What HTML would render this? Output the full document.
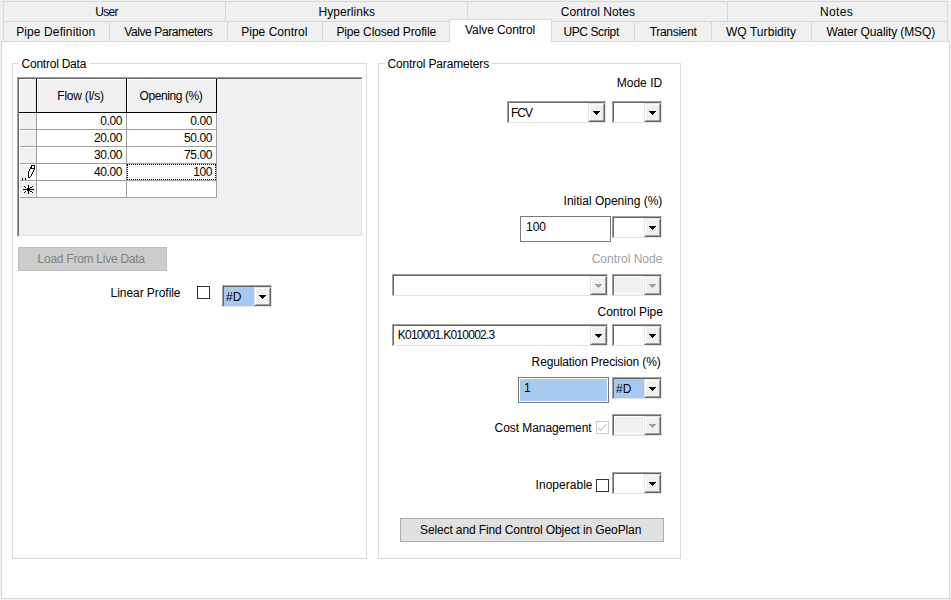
<!DOCTYPE html>
<html><head><meta charset="utf-8">
<style>
*{box-sizing:border-box;margin:0;padding:0}
html,body{width:951px;height:600px;overflow:hidden;background:#f0f0f0;position:relative;font-family:"Liberation Sans",sans-serif;font-size:12px;color:#000}
.a{position:absolute}
.t{position:absolute;font-size:12px;line-height:14px;white-space:nowrap}
.hl{position:absolute;height:1px;background:#d9d9d9}
.vl{position:absolute;width:1px;background:#d9d9d9}
.gb{position:absolute;border:1px solid #dcdcdc}
/* classic combo */
.cb{position:absolute;height:22px;border-top:1px solid #a0a0a0;border-left:1px solid #a0a0a0;border-right:1px solid #e3e3e3;border-bottom:1px solid #e3e3e3}
.cb>.in{position:absolute;left:0;top:0;right:0;bottom:0;border-top:1px solid #696969;border-left:1px solid #696969;background:#fff}
.cb .btn{position:absolute;right:0;top:0;bottom:0;width:17px;background:#f0f0f0;border-top:1px solid #e3e3e3;border-left:1px solid #e3e3e3;border-right:1px solid #696969;border-bottom:1px solid #696969}
.cb .btn>i{position:absolute;left:0;top:0;right:0;bottom:0;border-top:1px solid #fff;border-left:1px solid #fff;border-right:1px solid #a0a0a0;border-bottom:1px solid #a0a0a0}
.cb .arr{position:absolute;left:4px;top:7px}

.tb{position:absolute;border:1px solid #7a7a7a;background:#fff;height:26px}
.chk{position:absolute;width:13px;height:13px;border:1px solid #333;background:#fff}
</style></head>
<body>
<!-- tabs -->
<div class="hl" style="left:3px;top:1px;width:945px"></div>
<div class="vl" style="left:3px;top:1px;height:40px"></div>
<div class="vl" style="left:947px;top:1px;height:40px"></div>
<div class="hl" style="left:3px;top:21px;width:945px"></div>
<div class="vl" style="left:225px;top:1px;height:20px"></div>
<div class="vl" style="left:467px;top:1px;height:20px"></div>
<div class="vl" style="left:727px;top:1px;height:20px"></div>
<div class="vl" style="left:109px;top:21px;height:20px"></div>
<div class="vl" style="left:227px;top:21px;height:20px"></div>
<div class="vl" style="left:322px;top:21px;height:20px"></div>
<div class="vl" style="left:634px;top:21px;height:20px"></div>
<div class="vl" style="left:711px;top:21px;height:20px"></div>
<div class="vl" style="left:811px;top:21px;height:20px"></div>

<div class="t" style="left:95.3px;top:5px;letter-spacing:-0.73px">User</div>
<div class="t" style="left:318.5px;top:5px;letter-spacing:0.06px">Hyperlinks</div>
<div class="t" style="left:560.8px;top:5px;letter-spacing:0.06px">Control Notes</div>
<div class="t" style="left:820.0px;top:5px;letter-spacing:0.38px">Notes</div>

<div class="t" style="left:16.2px;top:25px;letter-spacing:0.11px">Pipe Definition</div>
<div class="t" style="left:124.2px;top:25px;letter-spacing:-0.39px">Valve Parameters</div>
<div class="t" style="left:241.2px;top:25px;letter-spacing:0.02px">Pipe Control</div>
<div class="t" style="left:336.4px;top:25px;letter-spacing:-0.13px">Pipe Closed Profile</div>
<div class="t" style="left:563.4px;top:25px;letter-spacing:-0.39px">UPC Script</div>
<div class="t" style="left:649.7px;top:25px;letter-spacing:-0.3px">Transient</div>
<div class="t" style="left:725.9px;top:25px;letter-spacing:0.07px">WQ Turbidity</div>
<div class="t" style="left:826.4px;top:25px;letter-spacing:-0.12px">Water Quality (MSQ)</div>

<!-- panel -->
<div class="a" style="left:1px;top:41px;width:949px;height:558px;background:#fff;border:1px solid #d9d9d9"></div>
<!-- selected tab -->
<div class="a" style="left:449px;top:19px;width:103px;height:23px;background:#fff;border:1px solid #d9d9d9;border-bottom:none"></div>
<div class="t" style="left:465.0px;top:23px;letter-spacing:-0.08px">Valve Control</div>

<!-- group 1 -->
<div class="gb" style="left:12px;top:63px;width:355px;height:496px"></div>
<div class="a" style="left:19px;top:58px;width:71px;height:10px;background:#fff"></div>
<div class="t" style="left:21.5px;top:57px;letter-spacing:-0.23px">Control Data</div>

<!-- grid -->
<div class="a" style="left:17px;top:77px;width:346px;height:160px;background:#f0f0f0;border-top:1px solid #a0a0a0;border-left:1px solid #a0a0a0;border-right:1px solid #fff;border-bottom:1px solid #fff"></div>
<div class="a" style="left:18px;top:78px;width:344px;height:158px;border-top:1px solid #696969;border-left:1px solid #696969;border-right:1px solid #e3e3e3;border-bottom:1px solid #e3e3e3"></div>
<!-- header cells -->
<div class="a" style="left:19px;top:79px;width:198px;height:34px;background:#f0f0f0"></div>
<div class="a" style="left:19px;top:79px;width:198px;height:1px;background:#fff"></div>
<div class="a" style="left:19px;top:79px;width:1px;height:33px;background:#fff"></div>
<div class="a" style="left:37px;top:79px;width:1px;height:33px;background:#fff"></div>
<div class="a" style="left:127px;top:79px;width:1px;height:33px;background:#fff"></div>
<div class="a" style="left:19px;top:112px;width:198px;height:1px;background:#000"></div>
<div class="a" style="left:36px;top:79px;width:1px;height:34px;background:#000"></div>
<div class="a" style="left:126px;top:79px;width:1px;height:34px;background:#000"></div>
<div class="a" style="left:216px;top:79px;width:1px;height:34px;background:#000"></div>
<!-- rows -->
<div class="a" style="left:19px;top:113px;width:17px;height:85px;background:#f0f0f0"></div>
<div class="a" style="left:37px;top:113px;width:179px;height:85px;background:#fff"></div>
<div class="a" style="left:19px;top:113px;width:1px;height:85px;background:#fff"></div>
<div class="a" style="left:20px;top:113px;width:16px;height:1px;background:#fff"></div>
<div class="a" style="left:20px;top:130px;width:16px;height:1px;background:#fff"></div>
<div class="a" style="left:20px;top:147px;width:16px;height:1px;background:#fff"></div>
<div class="a" style="left:20px;top:164px;width:16px;height:1px;background:#fff"></div>
<div class="a" style="left:20px;top:181px;width:16px;height:1px;background:#fff"></div>
<div class="a" style="left:20px;top:129px;width:197px;height:1px;background:#a0a0a0"></div>
<div class="a" style="left:20px;top:146px;width:197px;height:1px;background:#a0a0a0"></div>
<div class="a" style="left:20px;top:163px;width:197px;height:1px;background:#a0a0a0"></div>
<div class="a" style="left:20px;top:180px;width:197px;height:1px;background:#a0a0a0"></div>
<div class="a" style="left:20px;top:197px;width:197px;height:1px;background:#a0a0a0"></div>
<div class="a" style="left:36px;top:113px;width:1px;height:85px;background:#a0a0a0"></div>
<div class="a" style="left:126px;top:113px;width:1px;height:85px;background:#a0a0a0"></div>
<div class="a" style="left:216px;top:113px;width:1px;height:85px;background:#a0a0a0"></div>
<div class="t" style="left:57.3px;top:89px;letter-spacing:-0.22px">Flow (l/s)</div>
<div class="t" style="left:139.5px;top:89px;letter-spacing:-0.4px">Opening (%)</div>
<div class="t" style="left:37px;top:114px;width:85px;text-align:right;letter-spacing:-0.4px">0.00</div>
<div class="t" style="left:127px;top:114px;width:85px;text-align:right;letter-spacing:-0.4px">0.00</div>
<div class="t" style="left:37px;top:131px;width:85px;text-align:right;letter-spacing:-0.4px">20.00</div>
<div class="t" style="left:127px;top:131px;width:85px;text-align:right;letter-spacing:-0.4px">50.00</div>
<div class="t" style="left:37px;top:148px;width:85px;text-align:right;letter-spacing:-0.4px">30.00</div>
<div class="t" style="left:127px;top:148px;width:85px;text-align:right;letter-spacing:-0.4px">75.00</div>
<div class="t" style="left:37px;top:165px;width:85px;text-align:right;letter-spacing:-0.4px">40.00</div>
<div class="a" style="left:127px;top:164px;width:89px;height:16px;border:1px dotted #000"></div>
<div class="t" style="left:127px;top:165px;width:85px;text-align:right;letter-spacing:-0.4px">100</div>
<!-- pencil -->
<svg class="a" style="left:19px;top:164px" width="17" height="16" viewBox="0 0 17 16" shape-rendering="crispEdges" fill="#000"><rect x="8" y="0" width="9" height="16" fill="#fff"/><rect x="12" y="1" width="4" height="1"/><rect x="12" y="2" width="1" height="1"/><rect x="15" y="2" width="1" height="1"/><rect x="11" y="3" width="2" height="1"/><rect x="15" y="3" width="1" height="1"/><rect x="11" y="4" width="5" height="1"/><rect x="10" y="5" width="1" height="1"/><rect x="15" y="5" width="1" height="1"/><rect x="10" y="6" width="1" height="1"/><rect x="14" y="6" width="1" height="1"/><rect x="9" y="7" width="1" height="1"/><rect x="14" y="7" width="1" height="1"/><rect x="9" y="8" width="1" height="1"/><rect x="13" y="8" width="1" height="1"/><rect x="9" y="9" width="1" height="1"/><rect x="13" y="9" width="1" height="1"/><rect x="9" y="10" width="1" height="1"/><rect x="12" y="10" width="1" height="1"/><rect x="9" y="11" width="1" height="1"/><rect x="12" y="11" width="1" height="1"/><rect x="9" y="12" width="1" height="1"/><rect x="11" y="12" width="1" height="1"/><rect x="9" y="13" width="2" height="1"/><rect x="3" y="14" width="1" height="2"/><rect x="6" y="14" width="1" height="2"/></svg>
<!-- asterisk -->
<svg class="a" style="left:19px;top:181px" width="17" height="16" viewBox="0 0 17 16" shape-rendering="crispEdges" fill="#000"><rect x="9" y="4" width="1" height="9"/><rect x="4" y="8" width="11" height="1"/><rect x="8" y="7" width="3" height="3"/><rect x="7" y="8" width="1" height="1"/><rect x="5" y="5" width="1" height="1"/><rect x="6" y="6" width="1" height="1"/><rect x="13" y="5" width="1" height="1"/><rect x="11" y="6" width="2" height="1"/><rect x="6" y="10" width="1" height="1"/><rect x="5" y="11" width="1" height="1"/><rect x="11" y="10" width="2" height="1"/><rect x="13" y="11" width="1" height="1"/></svg>

<!-- load button -->
<div class="a" style="left:18px;top:247px;width:149px;height:24px;background:#cccccc;border:1px solid #bfbfbf"></div>
<div class="t" style="left:37.6px;top:252px;letter-spacing:-0.26px;color:#838383">Load From Live Data</div>
<div class="t" style="left:110.6px;top:286px;letter-spacing:-0.06px">Linear Profile</div>
<div class="chk" style="left:197px;top:286px"></div>
<div class="cb" style="left:222px;top:285px;width:50px"><div class="in" style="background:#a6caf0"><div class="btn"><i></i><svg class="arr" width="7" height="4" shape-rendering="crispEdges"><path d="M0 0h7v1h-1v1h-1v1h-1v1h-1v-1h-1v-1h-1v-1h-1z" fill="#000"/></svg></div></div></div>
<div class="t" style="left:226px;top:290px">#D</div>

<!-- group 2 -->
<div class="gb" style="left:378px;top:63px;width:303px;height:496px"></div>
<div class="a" style="left:385px;top:58px;width:106px;height:10px;background:#fff"></div>
<div class="t" style="left:387.5px;top:57px;letter-spacing:-0.14px">Control Parameters</div>


<!-- right panel controls -->
<div class="t" style="left:616.7px;top:76px;letter-spacing:0.02px">Mode ID</div>
<div class="cb" style="left:507px;top:101px;width:99px"><div class="in" style="background:#fff"><div class="btn"><i></i><svg class="arr" width="7" height="4" shape-rendering="crispEdges"><path d="M0 0h7v1h-1v1h-1v1h-1v1h-1v-1h-1v-1h-1v-1h-1z" fill="#000"/></svg></div></div></div>
<div class="t" style="left:511px;top:106px;letter-spacing:-1px">FCV</div>
<div class="cb" style="left:612px;top:101px;width:50px"><div class="in" style="background:#fff"><div class="btn"><i></i><svg class="arr" width="7" height="4" shape-rendering="crispEdges"><path d="M0 0h7v1h-1v1h-1v1h-1v1h-1v-1h-1v-1h-1v-1h-1z" fill="#000"/></svg></div></div></div>

<div class="t" style="left:563.6px;top:194px">Initial Opening (%)</div>
<div class="tb" style="left:520px;top:216px;width:91px"></div>
<div class="t" style="left:526px;top:220px">100</div>
<div class="cb" style="left:612px;top:216px;width:50px"><div class="in" style="background:#fff"><div class="btn"><i></i><svg class="arr" width="7" height="4" shape-rendering="crispEdges"><path d="M0 0h7v1h-1v1h-1v1h-1v1h-1v-1h-1v-1h-1v-1h-1z" fill="#000"/></svg></div></div></div>

<div class="t" style="left:591.7px;top:252px;color:#a0a0a0">Control Node</div>
<div class="cb" style="left:392px;top:274px;width:216px"><div class="in" style="background:#fff"><div class="btn"><i></i><svg class="arr" width="7" height="4" shape-rendering="crispEdges"><path d="M0 0h7v1h-1v1h-1v1h-1v1h-1v-1h-1v-1h-1v-1h-1z" fill="#a0a0a0"/></svg></div></div></div>
<div class="cb dis" style="left:612px;top:274px;width:50px"><div class="in" style="background:#f0f0f0"><div class="a" style="left:0;top:0;width:30px;height:18px;border:1px solid #fff"></div><div class="btn"><i></i><svg class="arr" width="7" height="4" shape-rendering="crispEdges"><path d="M0 0h7v1h-1v1h-1v1h-1v1h-1v-1h-1v-1h-1v-1h-1z" fill="#a0a0a0"/></svg></div></div></div>

<div class="t" style="left:597.6px;top:305px;letter-spacing:-0.07px">Control Pipe</div>
<div class="cb" style="left:392px;top:324px;width:216px"><div class="in" style="background:#fff"><div class="btn"><i></i><svg class="arr" width="7" height="4" shape-rendering="crispEdges"><path d="M0 0h7v1h-1v1h-1v1h-1v1h-1v-1h-1v-1h-1v-1h-1z" fill="#000"/></svg></div></div></div>
<div class="t" style="left:397.7px;top:328px;letter-spacing:-0.74px">K010001.K010002.3</div>
<div class="cb" style="left:612px;top:324px;width:50px"><div class="in" style="background:#fff"><div class="btn"><i></i><svg class="arr" width="7" height="4" shape-rendering="crispEdges"><path d="M0 0h7v1h-1v1h-1v1h-1v1h-1v-1h-1v-1h-1v-1h-1z" fill="#000"/></svg></div></div></div>

<div class="t" style="left:531.6px;top:355px;letter-spacing:-0.13px">Regulation Precision (%)</div>
<div class="tb" style="left:518px;top:377px;width:91px;background:#a6caf0;box-shadow:inset 0 0 0 1px #fff"></div>
<div class="t" style="left:524px;top:381px">1</div>
<div class="cb" style="left:612px;top:377px;width:50px"><div class="in" style="background:#a6caf0"><div class="btn"><i></i><svg class="arr" width="7" height="4" shape-rendering="crispEdges"><path d="M0 0h7v1h-1v1h-1v1h-1v1h-1v-1h-1v-1h-1v-1h-1z" fill="#000"/></svg></div></div></div>
<div class="t" style="left:616px;top:382px">#D</div>

<div class="t" style="left:494.6px;top:421px;letter-spacing:-0.07px">Cost Management</div>
<div class="chk" style="left:596px;top:421px;border-color:#cccccc"></div>
<svg class="a" style="left:596px;top:421px" width="13" height="13"><path d="M1.5 6.5L4.5 9.5L10.5 3" stroke="#c0c0c0" stroke-width="1.1" fill="none"/></svg>
<div class="cb dis" style="left:612px;top:414px;width:50px"><div class="in" style="background:#f0f0f0"><div class="a" style="left:0;top:0;width:30px;height:18px;border:1px solid #fff"></div><div class="btn"><i></i><svg class="arr" width="7" height="4" shape-rendering="crispEdges"><path d="M0 0h7v1h-1v1h-1v1h-1v1h-1v-1h-1v-1h-1v-1h-1z" fill="#a0a0a0"/></svg></div></div></div>

<div class="t" style="left:535.6px;top:478px;letter-spacing:0.02px">Inoperable</div>
<div class="chk" style="left:596px;top:479px"></div>
<div class="cb" style="left:612px;top:472px;width:50px"><div class="in" style="background:#fff"><div class="btn"><i></i><svg class="arr" width="7" height="4" shape-rendering="crispEdges"><path d="M0 0h7v1h-1v1h-1v1h-1v1h-1v-1h-1v-1h-1v-1h-1z" fill="#000"/></svg></div></div></div>

<div class="a" style="left:400px;top:518px;width:264px;height:24px;background:#e1e1e1;border:1px solid #adadad"></div>
<div class="t" style="left:420.0px;top:523px;letter-spacing:-0.12px">Select and Find Control Object in GeoPlan</div>
</body></html>
